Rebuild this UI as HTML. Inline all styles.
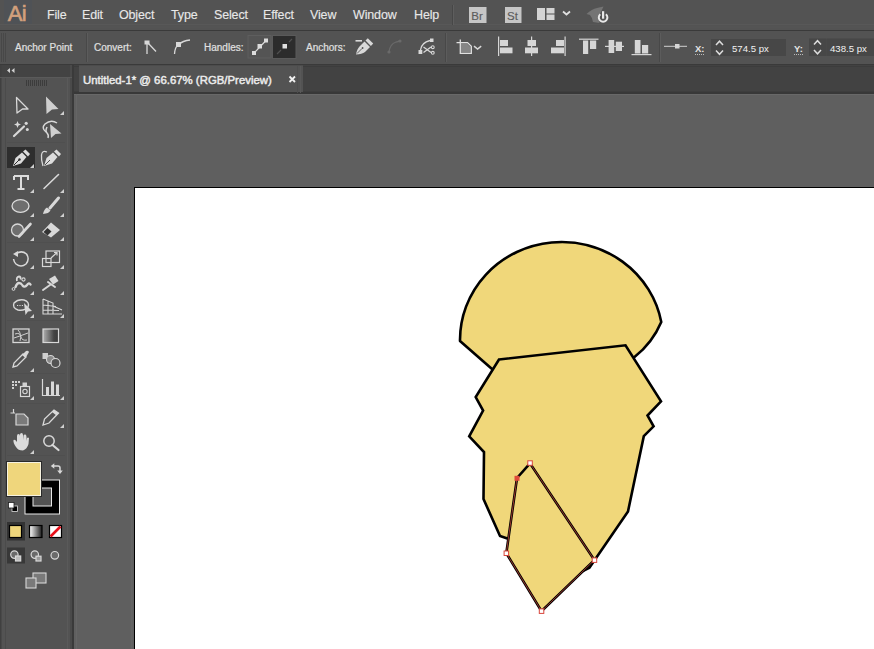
<!DOCTYPE html>
<html><head><meta charset="utf-8">
<style>
*{margin:0;padding:0}
html,body{width:874px;height:649px;overflow:hidden;background:#535353}
svg{position:absolute;left:0;top:0;display:block}
text{font-family:"Liberation Sans",sans-serif}
.mi{font-size:12.5px;fill:#e8e8e8;letter-spacing:-0.15px;stroke:#e8e8e8;stroke-width:0.12px}
.ct{font-size:10px;fill:#e0e0e0;stroke:#e0e0e0;stroke-width:0.2px}
</style></head><body>
<svg width="874" height="649" viewBox="0 0 874 649">
<!-- ===== MENU BAR ===== -->
<rect x="0" y="0" width="874" height="30" fill="#535353"/>
<rect x="0" y="24" width="874" height="1" fill="#585858"/><rect x="0" y="26.5" width="874" height="1" fill="#575757"/><rect x="0" y="30" width="874" height="1" fill="#3a3a3a"/>

<!-- Ai logo -->
<rect x="4" y="0" width="28" height="24" fill="#4f5256"/>
<text x="7.8" y="21" font-size="22" fill="#d2a07c" stroke="#d2a07c" stroke-width="0.6" letter-spacing="-0.8">Ai</text>
<rect x="452" y="5" width="1" height="20" fill="#474747"/><rect x="453" y="5" width="1" height="20" fill="#5e5e5e"/>
<rect x="469" y="7" width="17.5" height="16" fill="#c6c6c6"/>
<text x="471.3" y="19.6" font-size="11.5" fill="#5c5c5c" stroke="#5c5c5c" stroke-width="0.15">Br</text>
<rect x="505" y="7" width="16.5" height="16" fill="#c6c6c6"/>
<text x="507" y="19.6" font-size="11.5" fill="#5c5c5c" stroke="#5c5c5c" stroke-width="0.15">St</text>
<g fill="#d4d4d4">
  <rect x="537" y="8" width="8" height="12"/>
  <rect x="546.5" y="8" width="8" height="5.5"/><rect x="546.5" y="14.5" width="8" height="5.5"/>
</g>
<path d="M563,11.5 L566.5,14.5 L570,11.5" stroke="#e0e0e0" stroke-width="1.8" fill="none"/>
<path d="M586.5,14 Q592,9 597,8 L603.5,6.5 L601,12 Q598,16 599.5,23 L593,22 Q592,17 590,15 Z" fill="#747474"/>
<path d="M600.3,14.2 A4.3,4.3 0 1 0 605.9,14.2" fill="none" stroke="#e8e8e8" stroke-width="2"/>
<rect x="602" y="11.2" width="2.2" height="7.5" fill="#e8e8e8"/>
<g id="menu">
  <text class="mi" x="47" y="19.3">File</text>
  <text class="mi" x="82" y="19.3">Edit</text>
  <text class="mi" x="119" y="19.3">Object</text>
  <text class="mi" x="171" y="19.3">Type</text>
  <text class="mi" x="214" y="19.3">Select</text>
  <text class="mi" x="263" y="19.3">Effect</text>
  <text class="mi" x="310" y="19.3">View</text>
  <text class="mi" x="353" y="19.3">Window</text>
  <text class="mi" x="414" y="19.3">Help</text>
</g>
<!-- ===== CONTROL BAR ===== -->
<rect x="0" y="31" width="874" height="33" fill="#535353"/>
<rect x="0" y="64" width="874" height="1" fill="#3a3a3a"/>
<g id="ctrl">
  <text class="ct" x="15" y="50.5">Anchor Point</text>
  <text class="ct" x="94" y="50.5">Convert:</text>
  <text class="ct" x="204" y="50.5">Handles:</text>
  <text class="ct" x="306" y="50.5">Anchors:</text>
</g>
<!-- control bar gripper & separators -->
<g fill="#484848">
  <rect x="1" y="33" width="1" height="29"/><rect x="3" y="33" width="1" height="29"/><rect x="5" y="33" width="1" height="29"/>
</g>
<rect x="86" y="33" width="1" height="29" fill="#484848"/><rect x="87" y="33" width="1" height="29" fill="#5c5c5c"/>
<rect x="445" y="33" width="1" height="29" fill="#484848"/><rect x="446" y="33" width="1" height="29" fill="#5c5c5c"/>
<rect x="659" y="33" width="1" height="29" fill="#484848"/><rect x="660" y="33" width="1" height="29" fill="#5c5c5c"/>
<g stroke="#d8d8d8" fill="none" stroke-width="1.3">
  <!-- convert to corner -->
  <rect x="144.5" y="40.5" width="5" height="4" fill="#d8d8d8" stroke="none"/>
  <path d="M147,44 L147,54 M148,43 L156,51.5"/>
  <!-- convert to smooth -->
  <rect x="176" y="42" width="5" height="5" fill="#d8d8d8" stroke="none"/>
  <path d="M174.5,54 Q175,47 178,45 Q183,40.5 190,40"/>
</g>
<!-- handles buttons -->
<rect x="248" y="35.5" width="23" height="22.5" fill="#545454" stroke="#5e5e5e" stroke-width="1"/>
<g fill="#dcdcdc"><rect x="252" y="51" width="4" height="4"/><rect x="257.5" y="44" width="4.5" height="4.5"/><rect x="264" y="38.5" width="4" height="4"/></g>
<path d="M254,53 L266,40.5" stroke="#dcdcdc" stroke-width="1.2"/>
<rect x="272.5" y="35.5" width="23.5" height="23" fill="#2c2c2c" stroke="#5a5a5a" stroke-width="1"/>
<rect x="282.5" y="44" width="4.5" height="4.5" fill="#e0e0e0"/>
<path d="M277,54 L281,50 M289,42 L292,39" stroke="#505050" stroke-width="1.2"/>
<!-- anchors icons -->
<g fill="#d8d8d8">
  <rect x="355.5" y="40" width="6.5" height="1.6"/>
  <path d="M356,54.5 Q357,49 359.5,46.5 L364.5,41.5 L370,47 L365,52 Q362,54 356,54.5 Z"/>
  <path d="M365.5,40.5 L367.8,38.2 L373.2,43.6 L370.9,45.9 Z"/>
</g>
<path d="M357,53.5 L362,48.5" stroke="#535353" stroke-width="0.9"/><circle cx="362.6" cy="48" r="0.9" fill="#535353"/>
<g stroke="#6a6a6a" fill="none" stroke-width="1.3">
  <path d="M389,52 Q390,44 396,42 L400,41"/>
</g>
<circle cx="389" cy="52" r="1.6" fill="#6a6a6a"/><circle cx="400" cy="41" r="1.6" fill="#6a6a6a"/>
<g stroke="#d8d8d8" fill="none" stroke-width="1.3">
  <path d="M420.5,50 Q421.5,42.5 430,40.5"/>
  <path d="M423.5,47 L431,52.5 M423.5,52.5 L431,47"/>
  <circle cx="432.8" cy="47.2" r="1.4" stroke-width="1.1"/><circle cx="432.8" cy="52.8" r="1.4" stroke-width="1.1"/>
</g>
<rect x="418.5" y="50" width="3.8" height="4" fill="#d8d8d8"/><rect x="430" y="38.5" width="3.5" height="3.5" fill="#d8d8d8"/>
<!-- transform icon -->
<path d="M461,43.5 L467,43.5 L470.5,47 L470.5,52.5 L461,52.5 Z" fill="#858585"/>
<g stroke="#e0e0e0" fill="none" stroke-width="1.3">
  <path d="M460.3,39.5 L460.3,53.3 L471.3,53.3 L471.3,46.3 L467.5,42.6 L456.5,42.6"/>
</g>
<path d="M474,46.2 L477.6,49 L481.2,46.2" stroke="#d8d8d8" fill="none" stroke-width="1.5"/>
<!-- align icons -->
<g fill="#d6d6d6">
  <rect x="498" y="36.5" width="1.2" height="19.5"/><rect x="500" y="40" width="8" height="6"/><rect x="500" y="47.5" width="12.5" height="5.8"/>
  <rect x="531" y="36.5" width="1.2" height="19.5"/><rect x="527.5" y="40" width="8.5" height="6"/><rect x="525" y="47.5" width="13" height="5.8"/>
  <rect x="564.5" y="36.5" width="1.2" height="19.5"/><rect x="556" y="40" width="8" height="6"/><rect x="551" y="47.5" width="13" height="5.8"/>
  <rect x="579" y="38.6" width="19.5" height="1.2"/><rect x="583" y="40.5" width="5.2" height="13.5"/><rect x="590" y="40.5" width="6.2" height="8.5"/>
  <rect x="605" y="45.8" width="19" height="1.2"/><rect x="608.6" y="40" width="5.6" height="13"/><rect x="615.8" y="41.7" width="6.2" height="9.3"/>
  <rect x="631.5" y="54" width="20" height="1.2"/><rect x="634.8" y="40" width="5.7" height="13.5"/><rect x="642" y="45" width="6.2" height="8.5"/>
</g>
<!-- reference point -->
<rect x="664" y="45.8" width="23" height="1" fill="#d0d0d0"/>
<rect x="675" y="44" width="4.5" height="4.5" fill="#d6d6d6"/>
<!-- X / Y -->
<text x="695" y="51.5" font-size="9.5" font-weight="bold" fill="#e6e6e6">X:</text>
<path d="M695,54.5 L704,54.5" stroke="#bbb" stroke-width="1" stroke-dasharray="1,1"/>
<rect x="711" y="39" width="17" height="17" fill="#474747"/>
<path d="M716,45 L719.5,41.2 L723,45 M716,50.5 L719.5,54.3 L723,50.5" stroke="#dcdcdc" fill="none" stroke-width="1.5"/>
<rect x="728" y="39" width="58" height="17" fill="#474747"/>
<text x="732" y="51.5" font-size="9.6" fill="#f2f2f2">574.5 px</text>
<text x="794" y="51.5" font-size="9.5" font-weight="bold" fill="#e6e6e6">Y:</text>
<path d="M794,54.5 L803,54.5" stroke="#bbb" stroke-width="1" stroke-dasharray="1,1"/>
<rect x="809" y="38.5" width="17.5" height="17.5" fill="#474747"/>
<path d="M814,44.5 L817.5,40.7 L821,44.5 M814,50 L817.5,53.8 L821,50" stroke="#dcdcdc" fill="none" stroke-width="1.5"/>
<rect x="826.5" y="38.5" width="48" height="17.5" fill="#474747"/>
<text x="830" y="51.5" font-size="9.6" fill="#f2f2f2">438.5 px</text>

<!-- ===== LEFT TOOLS PANEL ===== -->
<rect x="0" y="65" width="72" height="584" fill="#535353"/>
<rect x="0" y="65" width="72" height="12" fill="#434343"/>
<rect x="72" y="65" width="2" height="584" fill="#3a3a3a"/>
<!-- tools panel frame -->
<rect x="0" y="65" width="1.5" height="584" fill="#404040"/>
<rect x="5" y="78" width="1" height="571" fill="#4b4b4b"/>
<rect x="67" y="78" width="1" height="571" fill="#5a5a5a"/>
<rect x="70" y="65" width="2" height="584" fill="#4a4a4a"/>
<rect x="0" y="77" width="72" height="1" fill="#5a5a5a"/>
<path d="M10,68 L7,70.5 L10,73 Z M14.5,68 L11.5,70.5 L14.5,73 Z" fill="#d0d0d0"/>
<g fill="#3c3c3c"><rect x="26" y="80" width="1" height="6"/><rect x="28" y="80" width="1" height="6"/><rect x="30" y="80" width="1" height="6"/><rect x="32" y="80" width="1" height="6"/><rect x="34" y="80" width="1" height="6"/><rect x="36" y="80" width="1" height="6"/><rect x="38" y="80" width="1" height="6"/><rect x="40" y="80" width="1" height="6"/><rect x="42" y="80" width="1" height="6"/><rect x="44" y="80" width="1" height="6"/><rect x="46" y="80" width="1" height="6"/></g>
<!-- separators -->
<g fill="#4f4f4f"><rect x="7" y="142" width="58" height="1"/><rect x="7" y="242" width="58" height="1"/><rect x="7" y="320" width="58" height="1"/><rect x="7" y="373" width="58" height="1"/><rect x="7" y="403" width="58" height="1"/><rect x="7" y="455" width="58" height="1"/></g>
<!-- small corner triangles -->
<g fill="#cfcfcf">
  <path d="M64,111 L64,115 L60,115 Z"/>
  <path d="M34,164 L34,168 L30,168 Z"/>
  <path d="M34,189 L34,193 L30,193 Z"/><path d="M64,189 L64,193 L60,193 Z"/>
  <path d="M34,213 L34,217 L30,217 Z"/><path d="M64,213 L64,217 L60,217 Z"/>
  <path d="M34,237 L34,241 L30,241 Z"/><path d="M64,237 L64,241 L60,241 Z"/>
  <path d="M34,265 L34,269 L30,269 Z"/><path d="M64,265 L64,269 L60,269 Z"/>
  <path d="M34,291 L34,295 L30,295 Z"/><path d="M64,291 L64,295 L60,295 Z"/>
  <path d="M34,314 L34,318 L30,318 Z"/><path d="M64,314 L64,318 L60,318 Z"/>
  <path d="M34,368 L34,372 L30,372 Z"/>
  <path d="M34,396 L34,400 L30,400 Z"/><path d="M64,396 L64,400 L60,400 Z"/>
  <path d="M64,424 L64,428 L60,428 Z"/>
  <path d="M34,450 L34,454 L30,454 Z"/>
</g>
<!-- row1: selection / direct selection -->
<path d="M16.5,97.5 L28,109 L22.5,109 L17,113 Z" fill="none" stroke="#d8d8d8" stroke-width="1.3" stroke-linejoin="round"/>
<path d="M46,96.5 L58.5,109 L52,109.5 L46.5,114 Z" fill="#cfcfcf"/>
<!-- row2: magic wand / lasso -->
<path d="M14,136 L24,126.5" stroke="#d8d8d8" stroke-width="2.2" stroke-linecap="round"/>
<g fill="#d8d8d8"><circle cx="26.2" cy="123.3" r="1.6"/><circle cx="27.3" cy="129.4" r="1.5"/><path d="M17.5,121 L18.5,123.5 L21,124.5 L18.5,125.5 L17.5,128 L16.5,125.5 L14,124.5 L16.5,123.5 Z"/></g>
<path d="M46,132 Q41,128 45,124 Q51,119 57,123" fill="none" stroke="#d8d8d8" stroke-width="1.5"/>
<path d="M47,127 Q45,131 47,133 Q49,135 48,138" fill="none" stroke="#d8d8d8" stroke-width="1.5"/>
<path d="M50,124 L61.5,133.5 L55.5,134 L51,138 Z" fill="#cfcfcf"/>
<!-- row3: pen (selected) / curvature pen -->
<rect x="7" y="147" width="28" height="21" fill="#2e2e2e"/>
<path d="M34,164 L34,168 L30,168 Z" fill="#cfcfcf"/>
<path d="M13,166 L15.5,158 L22,152.5 L26.5,157 L21,163.5 Z" fill="#dcdcdc"/>
<path d="M23,151.5 L25.5,149.5 L30,154 L28,156.5 Z" fill="#dcdcdc"/>
<path d="M14,165 L19,160" stroke="#2e2e2e" stroke-width="1"/><circle cx="19.5" cy="159.5" r="1.2" fill="#2e2e2e"/>
<path d="M44,166 L46.5,158 L53,152.5 L57.5,157 L52,163.5 Z" fill="#dcdcdc"/>
<path d="M54,151.5 L56.5,149.5 L61,154 L59,156.5 Z" fill="#dcdcdc"/>
<path d="M45,165 L50,160" stroke="#535353" stroke-width="1"/>
<path d="M47,152 Q42,150 41.5,155 Q41,160 43,166" fill="none" stroke="#d8d8d8" stroke-width="1.3"/>
<!-- row4: type / line -->
<path d="M14,176 L28,176 L28,180 M14,176 L14,180 M21,176 L21,189 M17.5,189 L24.5,189" fill="none" stroke="#dcdcdc" stroke-width="2"/>
<path d="M44,188.5 L58.5,174.5" stroke="#d8d8d8" stroke-width="1.6" stroke-linecap="round"/>
<!-- row5: ellipse / paintbrush -->
<ellipse cx="20.5" cy="206" rx="8.5" ry="6.3" fill="#6e6e6e" stroke="#dcdcdc" stroke-width="1.3"/>
<path d="M50,208 L58.5,198" stroke="#d8d8d8" stroke-width="3" stroke-linecap="round"/>
<path d="M43,214 Q44,209 47,207.5 L50.5,210.5 Q49,213.5 43,214 Z" fill="#d8d8d8"/>
<!-- row6: shaper / eraser -->
<circle cx="17.5" cy="230" r="6" fill="#6e6e6e" stroke="#d8d8d8" stroke-width="1.3"/>
<path d="M19,236.5 L30.5,224" stroke="#d8d8d8" stroke-width="2.6" stroke-linecap="round"/>
<path d="M42,232 L51,222.5 L60,230 L51,237.5 Z" fill="#d8d8d8"/>
<path d="M43.5,232 L47.5,228 L51.5,231.5 L47.5,235.5 Z" fill="#333"/>
<!-- row7: rotate / scale -->
<path d="M16,253.5 Q22,250 26.5,254 Q30,259 26,264 Q21,268 16,264 Q14,262 13.5,259" fill="none" stroke="#d8d8d8" stroke-width="1.5"/>
<path d="M13,254 L18,251 L18,257 Z" fill="#d8d8d8"/>
<rect x="46" y="251" width="13.5" height="11.5" fill="none" stroke="#d8d8d8" stroke-width="1.2"/>
<rect x="42.5" y="258.5" width="8.5" height="8" fill="none" stroke="#d8d8d8" stroke-width="1.2"/>
<path d="M51,258 L57,252.5 M54,252.5 L57,252.5 L57,255.5" fill="none" stroke="#d8d8d8" stroke-width="1.2"/>
<!-- row8: width/warp / puppet -->
<path d="M15.5,287 Q17,283 19,283 Q21,283 22.5,285.5 Q24.5,288 27,285 Q29,282 30.5,284.5" fill="none" stroke="#d8d8d8" stroke-width="2.4" stroke-linecap="round"/>
<path d="M17,281 Q16,277 19,276.5 Q21,276.5 20.5,279.5" fill="none" stroke="#d8d8d8" stroke-width="1.8"/>
<circle cx="13.5" cy="289" r="1.4" fill="none" stroke="#d8d8d8" stroke-width="1"/><circle cx="23.5" cy="279.5" r="1.6" fill="none" stroke="#d8d8d8" stroke-width="1.1"/><circle cx="20" cy="286" r="1.3" fill="#535353"/>
<path d="M49,279 L55,275.5 L58.5,281 L53,284.5 Z" fill="#d8d8d8"/>
<path d="M48,282 L55,287 M50,285 L43,290" stroke="#d8d8d8" stroke-width="2" stroke-linecap="round"/>
<!-- row9: shape builder / perspective -->
<path d="M14,303 Q18,299 24,300 Q30,302 28,307 Q25,311 18,310 Q12,308 14,303 Z" fill="none" stroke="#d8d8d8" stroke-width="1.4"/>
<path d="M17,305.5 L24,305.5" stroke="#d8d8d8" stroke-width="1.2" stroke-dasharray="1.2,1.2"/>
<path d="M24,303 L32,311 L28,311.5 L25.5,315 Z" fill="#d8d8d8"/>
<path d="M43,299 L43,314 L62,314 M43,299 L53,303 L53,314 M48,301 L48,314 M43,305 L56,306.5 M43,310 L59,310.5 M53,306 L62,310" fill="none" stroke="#d8d8d8" stroke-width="1.1"/>
<!-- row10: mesh / gradient -->
<rect x="13" y="329" width="16" height="13.5" fill="none" stroke="#d8d8d8" stroke-width="1.3"/>
<path d="M15,334 Q20,332 21,337 Q22,341 27,340 M18,330 Q22,334 20,341 M14,338 Q20,336 28,333" fill="none" stroke="#cfcfcf" stroke-width="1"/>
<defs><linearGradient id="gr" x1="0" x2="1"><stop offset="0" stop-color="#b0b0b0"/><stop offset="0.7" stop-color="#444"/><stop offset="1" stop-color="#3a3a3a"/></linearGradient>
<linearGradient id="gr2" x1="0" x2="1"><stop offset="0" stop-color="#ffffff"/><stop offset="1" stop-color="#1a1a1a"/></linearGradient></defs>
<rect x="43" y="329" width="15.5" height="13.5" fill="url(#gr)" stroke="#d8d8d8" stroke-width="1.2"/>
<!-- row11: eyedropper / blend -->
<path d="M13,367 L14,363 L23,354 L26,357 L17,366 Z" fill="none" stroke="#d8d8d8" stroke-width="1.3"/>
<path d="M22,355 L26,351 Q28,350 29,352 L25.5,358 Z" fill="#d8d8d8"/>
<rect x="42.5" y="353" width="5.5" height="6" fill="#cfcfcf"/>
<circle cx="50.5" cy="359.5" r="4" fill="#8a8a8a" stroke="#d8d8d8" stroke-width="1.1"/>
<circle cx="55.5" cy="363" r="4.5" fill="#535353" stroke="#d8d8d8" stroke-width="1.2"/>
<!-- row12: symbol sprayer / graph -->
<g fill="#d0d0d0"><rect x="12" y="381" width="2" height="2"/><rect x="15" y="381" width="2" height="2"/><rect x="18" y="381" width="2" height="2"/><rect x="12" y="384" width="2" height="2"/><rect x="15" y="384" width="2" height="2"/><rect x="12" y="387" width="2" height="2"/></g>
<rect x="20.5" y="386.5" width="9" height="10" fill="none" stroke="#d8d8d8" stroke-width="1.2"/>
<circle cx="25" cy="391.5" r="2.2" fill="none" stroke="#d8d8d8" stroke-width="1.1"/>
<rect x="22.5" y="382.5" width="4.5" height="3.5" fill="#d0d0d0"/>
<path d="M42.5,379 L42.5,395.5 L60,395.5" fill="none" stroke="#d8d8d8" stroke-width="1.2"/>
<rect x="46" y="387" width="3" height="8" fill="#d8d8d8"/><rect x="51" y="381.5" width="3" height="13.5" fill="#d8d8d8"/><rect x="56" y="384.5" width="3" height="10.5" fill="#d8d8d8"/>
<!-- row13: artboard / slice -->
<path d="M13.5,409 L13.5,413 M10.5,413 L15,413" stroke="#d8d8d8" stroke-width="1.2"/>
<path d="M16,414 L24,414 L28,418 L28,425 L16,425 Z" fill="#7a7a7a" stroke="#d8d8d8" stroke-width="1.2"/>
<path d="M43,425 L44.5,419 L54,410 L58.5,413 L49,423 Z" fill="none" stroke="#d8d8d8" stroke-width="1.3"/>
<path d="M52,412 L56.5,415.5 L58.5,413 L54,410 Z" fill="#d8d8d8"/>
<!-- row14: hand / zoom -->
<path d="M16,447 Q13,443 13.5,440 Q15,439 17,442 L17,436 Q17,434 18.5,434 Q20,434 20,436 L20,440 L20,434.5 Q20,433 21.5,433 Q23,433 23,435 L23,440 L23.5,435.5 Q24,434 25.5,434.5 Q26.5,435 26.5,437 L26.5,441 L27,438 Q28,437 29,438 L28.5,444 Q27,449 23,450.5 Q18,450.5 16,447 Z" fill="#dcdcdc"/>
<circle cx="49" cy="441" r="5.2" fill="none" stroke="#d8d8d8" stroke-width="1.5"/>
<path d="M52.5,445 L58.5,450" stroke="#d8d8d8" stroke-width="2.2" stroke-linecap="round"/>
<!-- fill/stroke -->
<path d="M53.5,466 L58,466 Q60,466 60,468 L60,471" fill="none" stroke="#d8d8d8" stroke-width="1.5"/><path d="M50.8,466 L54.3,463.2 L54.3,468.8 Z M60,474 L57.2,470.5 L62.8,470.5 Z" fill="#d8d8d8"/>
<rect x="25" y="480" width="34.5" height="34" fill="#000" stroke="#e8e8e8" stroke-width="1"/>
<rect x="33" y="488" width="18.5" height="18" fill="#535353" stroke="#e8e8e8" stroke-width="1"/>
<rect x="6.5" y="461.5" width="35" height="35" fill="none" stroke="#2a2a2a" stroke-width="1"/><rect x="7.5" y="462.5" width="33" height="33" fill="#efd67c" stroke="#f6f2e0" stroke-width="1"/>
<rect x="12" y="506" width="5.5" height="5.5" fill="#000" stroke="#ddd" stroke-width="0.8"/>
<rect x="8.5" y="502.5" width="5.5" height="5.5" fill="#fff" stroke="#222" stroke-width="0.8"/>
<!-- color mode buttons -->
<rect x="7" y="522" width="18" height="18.5" fill="#333"/>
<rect x="9.5" y="525.5" width="12" height="12" fill="#efd67c" stroke="#000" stroke-width="1.2"/>
<rect x="29.5" y="525.5" width="12.5" height="12" fill="url(#gr2)" stroke="#000" stroke-width="1.2"/>
<rect x="49.5" y="525.5" width="12" height="12" fill="#fff" stroke="#000" stroke-width="1.2"/>
<path d="M50.5,536.5 L60.5,526.5" stroke="#e8101a" stroke-width="2.6"/>
<!-- drawing modes -->
<rect x="7" y="547.5" width="18" height="16" fill="#383838"/>
<g stroke="#d8d8d8" stroke-width="1.2">
  <circle cx="14.4" cy="554.6" r="3.7" fill="#6a6a6a"/><rect x="15.5" y="556" width="5.2" height="5" fill="#bdbdbd"/>
  <circle cx="34.8" cy="554.6" r="3.7" fill="#6a6a6a"/><rect x="36" y="556.2" width="5" height="4.8" fill="#9a9a9a"/>
  <circle cx="54.8" cy="555.3" r="3.8" fill="#6a6a6a"/>
</g>
<!-- screen mode -->
<rect x="33" y="573" width="13" height="10" fill="#7a7a7a" stroke="#d8d8d8" stroke-width="1.1"/>
<rect x="26" y="578" width="10" height="10" fill="#7a7a7a" stroke="#d8d8d8" stroke-width="1.1"/>

<!-- ===== TAB BAR ===== -->
<rect x="74" y="65" width="800" height="28" fill="#424242"/><rect x="74" y="66" width="800" height="1" fill="#3c3c3c"/><rect x="74" y="91" width="800" height="1" fill="#3d3d3d"/>
<rect x="79" y="65" width="224" height="28" fill="#535353"/><rect x="79" y="65" width="224" height="1" fill="#4c4c4c"/>
<rect x="74" y="92" width="800" height="2" fill="#383838"/>
<text x="83" y="84" font-size="11.4" fill="#ececec" stroke="#ececec" stroke-width="0.45">Untitled-1* @ 66.67% (RGB/Preview)</text>
<path d="M289.5,76.5 L295,82 M295,76.5 L289.5,82" stroke="#f0f0f0" stroke-width="1.8"/>
<rect x="297" y="66" width="1" height="27" fill="#4e4e4e"/><rect x="300" y="66" width="1" height="27" fill="#595959"/>
<!-- ===== CANVAS ===== -->
<rect x="74" y="94" width="800" height="555" fill="#5f5f5f"/><rect x="74" y="94" width="800" height="1" fill="#686868"/>
<rect x="76" y="94" width="1" height="555" fill="#656565"/>
<rect x="131" y="190" width="1.5" height="459" fill="#646464"/>
<rect x="134" y="187" width="740" height="462" fill="#000"/>
<rect x="135" y="188" width="739" height="461" fill="#fff"/>
<!-- artwork -->
<path d="M492,369 L460,341 A101.5,98 0 0 1 661.27,322 Q652.4,342.9 634.5,357 Z" fill="#f0d77a" stroke="#000" stroke-width="2.6" stroke-linejoin="round"/>
<path d="M499,359.5 L625.5,345.3 L661,401.3 L647.5,415.5 L653.6,426.4 L643.8,436.2 L628,511.4 L589.4,567.7 L575,575 L507.3,538.4 L500,536 L483.5,499 L484,452 L469.2,436.3 L483.1,410.5 L475.7,397.1 Z" fill="#f0d77a" stroke="#000" stroke-width="2.6"/>
<path d="M517,478 L530,463.3 L594.4,560.1 L541.5,611.1 L506.3,553.2 Z" fill="#f0d77a" stroke="#000" stroke-width="2.6"/>

<!-- selection overlay -->
<g stroke="#e0503f" stroke-width="0.8" stroke-opacity="0.85" fill="none">
  <path d="M506.3,553.2 L517,478 M530,463.3 L594.4,560.1 L541.5,611.1 L506.3,553.2"/>
</g>
<g fill="#fff" stroke="#d9463c" stroke-width="1">
  <rect x="527.8" y="460.8" width="4.5" height="4.5"/>
  <rect x="592.2" y="557.9" width="4.5" height="4.5"/>
  <rect x="539.3" y="608.9" width="4.5" height="4.5"/>
  <rect x="504.1" y="551" width="4.5" height="4.5"/>
</g>
<rect x="514.5" y="475.8" width="5" height="5" fill="#e04a3a"/>
</svg>
</body></html>
